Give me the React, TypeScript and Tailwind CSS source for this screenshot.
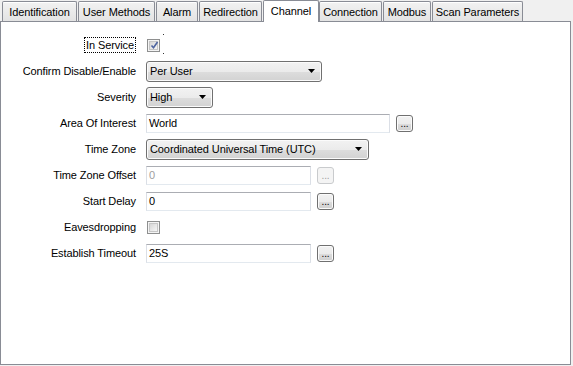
import React from "react";

const tabs: { label: string; w: number; ml: number; active?: boolean }[] = [
  { label: "Identification", w: 75, ml: 2 },
  { label: "User Methods", w: 77, ml: 1 },
  { label: "Alarm", w: 42, ml: 1 },
  { label: "Redirection", w: 63, ml: 1 },
  { label: "Channel", w: 56, ml: 1, active: true },
  { label: "Connection", w: 63, ml: 0 },
  { label: "Modbus", w: 48, ml: 1 },
  { label: "Scan Parameters", w: 91, ml: 1 },
];

function Arrow() {
  return (
    <svg width="7" height="4" viewBox="0 0 7 4" className="shrink-0">
      <path d="M0 0 H7 L3.5 4 Z" fill="#000" />
    </svg>
  );
}

function Combo({ value, w }: { value: string; w: number }) {
  return (
    <div
      className="h-[21px] flex items-center justify-between pl-[3px] pr-[6px] border border-[#707070] rounded-[3px] bg-[linear-gradient(#f2f2f2_0%,#ebebeb_50%,#dddddd_51%,#d2d2d2_100%)] shadow-[inset_0_0_0_1px_#fbfbfb]"
      style={{ width: w }}
    >
      <span className="leading-none">{value}</span>
      <Arrow />
    </div>
  );
}

function TextBox({ value, w, disabled }: { value: string; w: number; disabled?: boolean }) {
  return (
    <div
      className={
        "h-[19px] flex items-center pl-[2px] bg-white border border-t-[#abadb3] border-x-[#dbdfe6] border-b-[#e3e9ef] " +
        (disabled ? "text-[#a0a0a0]" : "text-black")
      }
      style={{ width: w }}
    >
      <span className="leading-none">{value}</span>
    </div>
  );
}

function DotsButton({ disabled }: { disabled?: boolean }) {
  return (
    <div
      className={
        "ml-[6px] w-[17px] h-[17px] flex items-end justify-center pb-[2px] rounded-[3px] border text-[10px] leading-none " +
        (disabled
          ? "border-[#c9cbcd] bg-[#f4f4f4] text-[#a0a0a0]"
          : "border-[#707070] bg-[linear-gradient(#f2f2f2_0%,#ebebeb_50%,#dddddd_51%,#cfcfcf_100%)] text-black shadow-[inset_0_0_0_1px_#fbfbfb]")
      }
    >
      ...
    </div>
  );
}

function Checkbox({ checked }: { checked?: boolean }) {
  return (
    <div className="relative w-[13px] h-[13px] border border-[#8e8f8f] bg-[#f4f4f4] p-[1px]">
      <div className="w-full h-full border border-[#c6c6c6] bg-[linear-gradient(135deg,#d6d6d6,#f6f6f6)] relative">
        {checked && (
          <svg width="9" height="9" viewBox="0 0 9 9" className="absolute left-[0px] top-[-1px]">
            <path d="M1.5 4.5 L3.5 6.8 L7.5 1" stroke="#4e64a0" strokeWidth="1.6" fill="none" />
          </svg>
        )}
      </div>
    </div>
  );
}

function Row({
  label,
  focus,
  children,
}: {
  label: string;
  focus?: boolean;
  children: React.ReactNode;
}) {
  return (
    <div className="h-[26px] flex items-center">
      <div className="w-[135px] flex justify-end shrink-0">
        {focus ? (
          <span className="border border-dotted border-black h-[16px] px-[1px] flex items-center leading-none">
            {label}
          </span>
        ) : (
          <span className="leading-none">{label}</span>
        )}
      </div>
      <div className="ml-[10px] flex items-center">{children}</div>
    </div>
  );
}

export default function App() {
  return (
    <div className="w-[573px] h-[366px] bg-[#f0f0f0] text-[11px] tracking-[-0.1px] text-black font-['Liberation_Sans',Arial,sans-serif] overflow-hidden">
      <div className="flex items-end h-[22px] relative z-10 -mb-px">
        {tabs.map((t) =>
          t.active ? (
            <div
              key={t.label}
              className="h-[22px] flex justify-center pt-[5px] bg-white border border-b-0 border-[#898c95] rounded-t-[2px]"
              style={{ width: t.w, marginLeft: t.ml }}
            >
              <span className="leading-none">{t.label}</span>
            </div>
          ) : (
            <div
              key={t.label}
              className="h-[20px] mb-px flex items-center justify-center border border-[#898c95] border-b-0 rounded-t-[2px] bg-[linear-gradient(#f2f2f2,#e3e3e3)] shadow-[inset_0_1px_0_#ffffff]"
              style={{ width: t.w, marginLeft: t.ml }}
            >
              <span className="leading-none pt-[1px]">{t.label}</span>
            </div>
          )
        )}
      </div>
      <div className="w-[571px] h-[344px] bg-white border border-[#898c95] pt-[10px]">
        <Row label="In Service" focus>
          <div className="relative ml-[1px]">
            <Checkbox checked />
            <span className="absolute left-[16px] top-[-5px] w-px h-px bg-[#333]" />
            <span className="absolute left-[16px] top-[14px] w-px h-px bg-[#333]" />
          </div>
        </Row>
        <Row label="Confirm Disable/Enable">
          <Combo value="Per User" w={176} />
        </Row>
        <Row label="Severity">
          <Combo value="High" w={67} />
        </Row>
        <Row label="Area Of Interest">
          <TextBox value="World" w={244} />
          <DotsButton />
        </Row>
        <Row label="Time Zone">
          <Combo value="Coordinated Universal Time (UTC)" w={223} />
        </Row>
        <Row label="Time Zone Offset">
          <TextBox value="0" w={165} disabled />
          <DotsButton disabled />
        </Row>
        <Row label="Start Delay">
          <TextBox value="0" w={165} />
          <DotsButton />
        </Row>
        <Row label="Eavesdropping">
          <div className="ml-[1px]">
            <Checkbox />
          </div>
        </Row>
        <Row label="Establish Timeout">
          <TextBox value="25S" w={165} />
          <DotsButton />
        </Row>
      </div>
    </div>
  );
}
